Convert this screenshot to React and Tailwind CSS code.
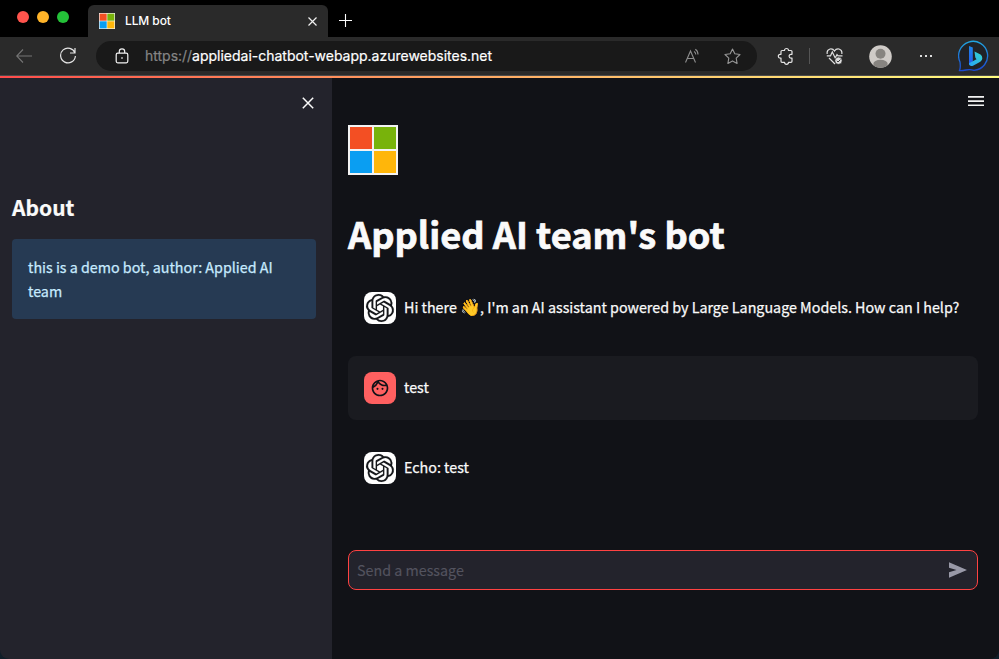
import React from "react";
import { SiOpenai } from "react-icons/si";
import { MdOutlineFace } from "react-icons/md";

const SOURCE = "font-['Noto_Sans_CJK_SC',sans-serif]";

function MicrosoftLogo({ size }) {
  return (
    <svg width={size} height={size} viewBox="0 0 50 50" className="block shrink-0">
      <rect width="50" height="50" fill="#f3f3f3" />
      <rect x="2" y="2" width="22" height="22" fill="#f34f23" />
      <rect x="26" y="2" width="22" height="22" fill="#78b30b" />
      <rect x="2" y="26" width="22" height="22" fill="#0a9ef2" />
      <rect x="26" y="26" width="22" height="22" fill="#ffb60a" />
    </svg>
  );
}

function TabStrip() {
  return (
    <div className="flex h-[37px] bg-black">
      <div className="flex w-[88px] gap-2 pt-[11px] pl-[17px]">
        <span className="h-3 w-3 rounded-full bg-[#ff544d]" />
        <span className="h-3 w-3 rounded-full bg-[#ffb429]" />
        <span className="h-3 w-3 rounded-full bg-[#24c138]" />
      </div>
      <div className="mt-[5px] flex w-60 items-center rounded-t-md bg-[#2a2a2a] pr-[11px] pl-[11px]">
        <MicrosoftLogo size={16} />
        <span className="ml-[10px] flex-1 font-[Inter,sans-serif] text-[12px] leading-4 font-medium tracking-[-0.1px] text-white">LLM bot</span>
        <svg width="9" height="9" viewBox="0 0 9 9" stroke="#f0f0f0" strokeWidth="1.2">
          <path d="M.5.5l8 8M8.500.5l-8 8" />
        </svg>
      </div>
      <svg className="mt-[14px] ml-[11px]" width="13" height="13" viewBox="0 0 13 13" stroke="#fff" strokeWidth="1.1">
        <path d="M6.500 0v13M0 6.500h13" />
      </svg>
    </div>
  );
}

function BingLogo() {
  return (
    <svg width="32" height="32" viewBox="0 0 32 32" fill="none" className="block">
      <defs>
        <linearGradient id="ring" x1="0" y1="0" x2="0" y2="1">
          <stop stopColor="#21a5e0" />
          <stop offset="1" stopColor="#1b49cf" />
        </linearGradient>
        <linearGradient id="stem" x1="0" y1="0" x2="0" y2="1">
          <stop stopColor="#1d86e8" />
          <stop offset="1" stopColor="#2658ee" />
        </linearGradient>
        <linearGradient id="bowl" x1="1" y1="0" x2="0" y2="1">
          <stop stopColor="#35d2c9" />
          <stop offset="1" stopColor="#28a6fa" />
        </linearGradient>
      </defs>
      <path d="M1.500 30.500Q2.800 28 2 22A14.500 14.500 0 1 1 16 30.300Q12 29.300 8 30Q4 30.700 1.500 30.500Z" fill="#202226" stroke="url(#ring)" strokeWidth="1.300" />
      <path d="M11 6l3.800 1.500v14L11 25z" fill="url(#stem)" />
      <path d="M16.500 11.500l6 3q1.800 1 1.800 3.700 0 2.300-2 3.500L15 25.800q-4 1-4-2.500l7.500-4-1.200-1.700z" fill="url(#bowl)" />
    </svg>
  );
}

function Toolbar() {
  return (
    <div className="flex h-[39px] items-center border-b border-[#4a4a4a] bg-[#2a2a2a]">
      <svg className="ml-4" width="16" height="14" viewBox="0 0 16 14" fill="none" stroke="#747474" strokeWidth="1.1">
        <path d="M16 7H.8M7 .5L.7 7 7 13.500" />
      </svg>
      <svg className="ml-7" width="16" height="18" viewBox="0 0 16 18" fill="none" stroke="#e4e4e4" strokeWidth="1.200">
        <path d="M15 6A7.400 7.400 0 1 0 15.400 9M15 1v5h-5" />
      </svg>
      <div className="ml-5 flex h-[30px] w-[661px] items-center rounded-full bg-[#191919] pl-[19px]">
        <svg width="14" height="16" viewBox="0 0 14 16" fill="none" stroke="#f2f2f2" strokeWidth="1.200">
          <rect x="1.200" y="5.200" width="11.600" height="9.600" rx="1.500" />
          <path d="M4.300 5V3.500a2.700 2.700 0 0 1 5.400 0V5" />
          <rect x="6.300" y="9.300" width="1.400" height="1.400" fill="#fff" stroke="none" />
        </svg>
        <div className="ml-[16px] flex-1 font-[Inter,sans-serif] text-[14px] leading-5 tracking-[-0.01px] whitespace-nowrap text-white [-webkit-text-stroke:0.2px]">
          <span className="text-[#858585]">https://</span>appliedai-chatbot-webapp.azurewebsites.net
        </div>
        <svg width="17" height="16" viewBox="0 0 17 16" fill="none" stroke="#8d8d8d" strokeWidth="1.100">
          <path d="M.5 14.500L5.500 3l5 11.500M2.300 10.500h6.400M9 3.500q1.800 1 1.800 3M10.300 1.200Q13 2.800 13 6.500" />
        </svg>
        <svg className="mr-4 ml-[22px]" width="17" height="17" viewBox="0 0 17 17" fill="none" stroke="#969696" strokeWidth="1.100" strokeLinejoin="round">
          <path d="M8.500 1l2.300 4.800 5.200.7-3.800 3.600.9 5.300-4.600-2.500-4.600 2.500.9-5.300L1 6.500l5.200-.7z" />
        </svg>
      </div>
      <svg className="ml-5" width="17" height="18" viewBox="0 0 17 18" fill="none" stroke="#e4e4e4" strokeWidth="1.200" strokeLinejoin="round">
        <path d="M5 3.500h2.500a2 2 0 1 1 4 0H14q1 0 1 1V7.300h-1a1.900 1.900 0 0 0 0 3.800h1v3.200q0 1-1 1h-2.500a2 2 0 0 1-4 0H5q-1 0-1-1v-3.200h-.8a1.900 1.900 0 0 1 0-3.800H4V4.500q0-1 1-1z" />
      </svg>
      <span className="ml-[15px] h-4 w-px bg-[#555]" />
      <svg className="ml-4" width="18" height="17" viewBox="0 0 18 17" fill="none" stroke="#ddd" strokeWidth="1.200">
        <path d="M1.200 6Q.5 2 4 1q3-.5 4.500 2Q10 .5 13 1q3.500 1 2.800 5M.8 7.800h3.700L6.300 4l2.900 6 1.800-3.500 1 1.300h4.500M3 10l6 6" />
        <circle cx="12.500" cy="12.700" r="3.600" fill="#ddd" stroke="#2a2a2a" strokeWidth=".6" />
        <path d="M10.900 12.800l1.200 1.200 2.300-2.400" stroke="#333" strokeWidth="1" />
      </svg>
      <svg className="ml-[25px]" width="23" height="23" viewBox="0 0 23 23">
        <clipPath id="avatar"><circle cx="11.500" cy="11.500" r="11.300" /></clipPath>
        <g clipPath="url(#avatar)">
          <rect width="23" height="23" fill="#cfcbc7" />
          <circle cx="11.500" cy="8.700" r="5" fill="#878480" />
          <ellipse cx="11.500" cy="19" rx="7.200" ry="4.200" fill="#878480" />
        </g>
      </svg>
      <div className="ml-7 flex gap-[3px]">
        <span className="h-[2px] w-[2px] bg-[#ddd]" />
        <span className="h-[2px] w-[2px] bg-[#ddd]" />
        <span className="h-[2px] w-[2px] bg-[#ddd]" />
      </div>
      <div className="ml-[26px]"><BingLogo /></div>
    </div>
  );
}

function Sidebar() {
  return (
    <aside className="flex w-[332px] flex-col bg-[#23232c] pt-[19px] pr-4 pl-3">
      <svg className="mr-[2px] self-end" width="12" height="12" viewBox="0 0 12 12" stroke="#fafafa" strokeWidth="1.500">
        <path d="M.8.8l10.400 10.400M11.200.8L.8 11.200" />
      </svg>
      <h2 className="mt-[83px] text-[21px] leading-[30px] font-bold text-[#fafafa] [-webkit-text-stroke:0.2px]">About</h2>
      <div className="mt-[17px] h-20 rounded bg-[#263a53] px-4 pt-4 text-[14.3px] leading-6 text-[#c7ebff] [-webkit-text-stroke:0.25px]">
        this is a demo bot, author: Applied AI team
      </div>
    </aside>
  );
}

function BotAvatar() {
  return (
    <div className="flex h-8 w-8 shrink-0 items-center justify-center rounded-lg bg-white">
      <SiOpenai size={28} color="#16171b" stroke="#16171b" strokeWidth=".1" className="overflow-visible" />
    </div>
  );
}

function UserAvatar() {
  return (
    <div className="flex h-8 w-8 shrink-0 items-center justify-center rounded-lg bg-[#ff6060]">
      <MdOutlineFace size={20} color="#111217" />
    </div>
  );
}

function Message({ avatar, className = "", children }) {
  return (
    <div className={`flex h-16 items-center gap-2 rounded-lg px-4 text-[14.3px] leading-6 whitespace-nowrap text-[#fafafa] ${className}`}>
      {avatar}
      <p className="pb-[2px] [-webkit-text-stroke:0.25px]">{children}</p>
    </div>
  );
}

function Chat() {
  return (
    <main className="flex flex-1 flex-col bg-[#111217] pr-[21px] pl-4">
      <svg className="mt-[18px] -mr-[6px] self-end" width="16" height="11" viewBox="0 0 16 11">
        <path d="M0 0h16v1.700H0zM0 4.200h16v1.800H0zM0 8.500h16v1.600H0z" fill="#f3f3f3" />
      </svg>
      <div className="mt-[18px]"><MicrosoftLogo size={50} /></div>
      <h1 className="mt-[34px] text-[36.2px] leading-[48px] font-bold whitespace-nowrap text-[#fafafa] [-webkit-text-stroke:0.7px]">Applied AI team's bot</h1>
      <div className="mt-[19px] flex flex-col gap-4">
        <Message avatar={<BotAvatar />}>
          Hi there <span className="-mr-px text-[16.500px] leading-none">👋</span>, I'm an AI assistant powered by Large Language Models. How can I help?
        </Message>
        <Message avatar={<UserAvatar />} className="bg-[#1a1b20]">test</Message>
        <Message avatar={<BotAvatar />}>Echo: test</Message>
      </div>
      <div className="mt-[50px] flex h-10 items-center justify-between rounded-lg border border-[#ff4242] bg-[#23232c] pr-[10px] pl-2">
        <span className="text-[14.3px] leading-6 text-[#53535f] [-webkit-text-stroke:0.15px]">Send a message</span>
        <svg width="19" height="16" viewBox="0 0 19 16" fill="#9999a8">
          <path d="M1 .3L19 8 1 15.700V10.300L8.500 8 1 5.700z" />
        </svg>
      </div>
    </main>
  );
}

export default function App() {
  return (
    <div className="h-[659px] w-[999px] overflow-hidden bg-[#101e29]">
      <div className={`flex h-full flex-col overflow-hidden rounded-b-[9px] ${SOURCE}`}>
        <TabStrip />
        <Toolbar />
        <div className="h-[2px] bg-linear-to-r from-[#ff4b4b] to-[#fffd80]" />
        <div className="flex flex-1">
          <Sidebar />
          <Chat />
        </div>
      </div>
    </div>
  );
}
